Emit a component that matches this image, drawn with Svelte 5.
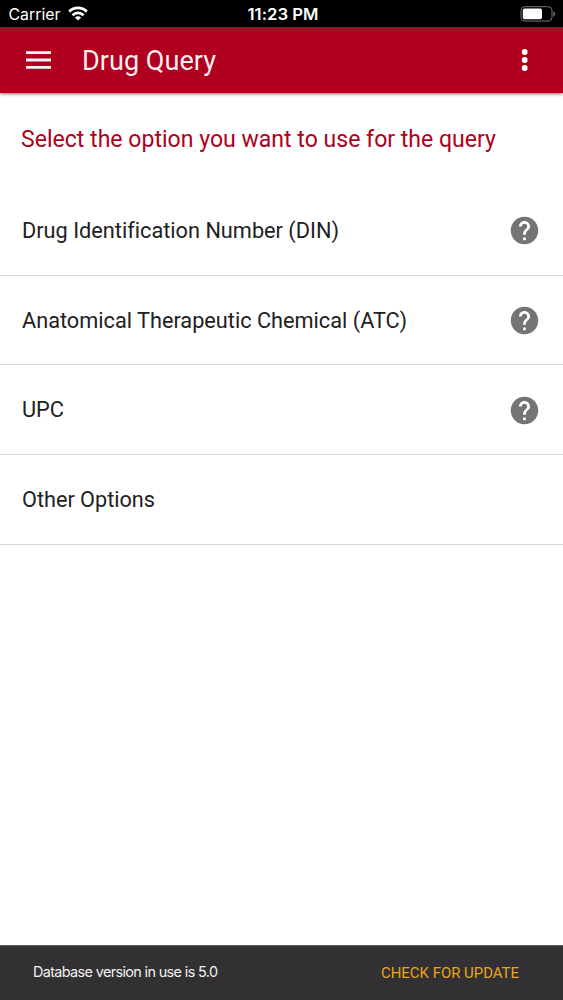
<script>
  const options = [
    { label: 'Drug Identification Number (DIN)', width: 317, help: true },
    { label: 'Anatomical Therapeutic Chemical (ATC)', width: 385, help: true },
    { label: 'UPC', width: 42, help: true },
    { label: 'Other Options', width: 133, help: false }
  ];
</script>

<div class="screen">
  <div class="status">
    <div class="carrier">
      <svg class="carrier-text" width="54" height="22"><text x="-.5" y="17" textLength="52" lengthAdjust="spacingAndGlyphs">Carrier</text></svg>
      <svg class="wifi" width="20" height="15" viewBox="0 0 20 15"><g fill="none" stroke="#fff" stroke-width="2.9"><path d="M1.2 5.6C6.2.6 13.8.6 18.8 5.6" /><path d="M4.5 9.2C7.7 6.1 12.3 6.1 15.5 9.2" /></g><path fill="#fff" d="M6.9 11.4q3.1-2.5 6.2 0L10 14.6z" /></svg>
    </div>
    <svg class="time" width="74" height="22"><text x="2.5" y="17" textLength="71" lengthAdjust="spacingAndGlyphs">11:23 PM</text></svg>
    <svg class="battery" width="36" height="16" viewBox="0 0 36 16"><rect x="1" y=".7" width="31" height="14.4" rx="3.8" fill="none" stroke="#757575" stroke-width="1" /><rect x="2.8" y="2.6" width="19.2" height="10.6" rx="1.8" fill="#fff" /><path fill="#757575" d="M33.4 5.3q1.8 1 1.8 2.7t-1.8 2.7z" /></svg>
  </div>
  <header>
    <svg class="menu" width="26" height="18" viewBox="0 0 26 18"><path fill="#fff" fill-opacity=".95" d="M0 .3h25v2.8H0zM0 7.6h25v2.8H0zM0 14.9h25v2.8H0z" /></svg>
    <svg class="title" width="140" height="40"><text x="0" y="29.5" textLength="134" lengthAdjust="spacingAndGlyphs">Drug Query</text></svg>
    <svg class="more" width="8" height="24" viewBox="0 0 8 24"><g fill="#fff"><circle cx="3.7" cy="4" r="2.9" /><circle cx="3.7" cy="12" r="2.9" /><circle cx="3.7" cy="20" r="2.9" /></g></svg>
  </header>
  <main>
    <svg class="prompt" width="520" height="40"><text x="0" y="27" textLength="475" lengthAdjust="spacingAndGlyphs">Select the option you want to use for the query</text></svg>
    {#each options as item}
      <div class="row">
        <svg class="label" width="440" height="40"><text x="0" y="27" textLength={item.width} lengthAdjust="spacingAndGlyphs">{item.label}</text></svg>
        {#if item.help}
          <svg class="help" width="33" height="33" viewBox="0 0 24 24"><path fill="#757376" d="M12 2C6.48 2 2 6.48 2 12s4.48 10 10 10 10-4.48 10-10S17.52 2 12 2zm1 17h-2v-2h2v2zm2.07-7.75-.9.92C13.45 12.9 13 13.5 13 15h-2v-.5c0-1.1.45-2.1 1.17-2.83l1.24-1.26c.37-.36.59-.86.59-1.41 0-1.1-.9-2-2-2s-2 .9-2 2H8c0-2.21 1.79-4 4-4s4 1.79 4 4c0 .88-.36 1.68-.93 2.25z" /></svg>
        {/if}
      </div>
    {/each}
  </main>
  <footer>
    <svg class="version" width="200" height="30"><text x="0" y="19" textLength="185" lengthAdjust="spacing">Database version in use is 5.0</text></svg>
    <svg class="update" width="140" height="30"><text x="0" y="20" textLength="138" lengthAdjust="spacingAndGlyphs">CHECK FOR UPDATE</text></svg>
  </footer>
</div>

<style>
  :global(body) { margin: 0; }
  .screen { width: 563px; height: 1000px; display: flex; flex-direction: column; background: #fff; font-family: Roboto, sans-serif; overflow: hidden; }
  svg { display: block; flex: none; overflow: visible; font-variant-ligatures: none; }
  .status { height: 27.4px; flex: none; background: #000; display: grid; grid-template-columns: 1fr 74px 1fr; align-items: center; font-family: Inter, sans-serif; font-size: 16px; }
  .status text { fill: #fff; }
  .carrier { display: flex; align-items: center; padding-left: 9px; gap: 5px; }
  .time { font-weight: 600; font-size: 15.5px; }
  .battery { justify-self: end; margin-right: 7px; }
  header { height: 65.6px; flex: none; background: #b00020; display: flex; align-items: center; padding: 0 34px 0 26px; box-shadow: 0 1px 3px #0008; z-index: 1; }
  .title { margin-left: 30px; font-size: 27px; }
  .title text { fill: #fff; fill-opacity: .94; }
  .more { margin-left: auto; }
  main { flex: 1; }
  .prompt { margin: 27px 0 26px 21px; font-size: 23px; }
  .prompt text { fill: #b00020; }
  .row { box-sizing: border-box; height: 89.7px; border-bottom: 1px solid #d9d9d9; display: flex; align-items: center; justify-content: space-between; padding: 1px 22px 0; }
  .label { font-size: 22px; }
  .label text { fill: #212121; }
  footer { height: 55px; flex: none; box-sizing: border-box; border-top: 1px solid #5a5b5a; background: #323032; display: flex; justify-content: space-between; align-items: center; padding: 0 42px 0 33px; font-size: 15px; }
  .version { font-family: Inter, sans-serif; font-size: 14.4px; }
  .version text { fill: #f0f0f0; }
  .update text { fill: #eba51c; }
</style>
